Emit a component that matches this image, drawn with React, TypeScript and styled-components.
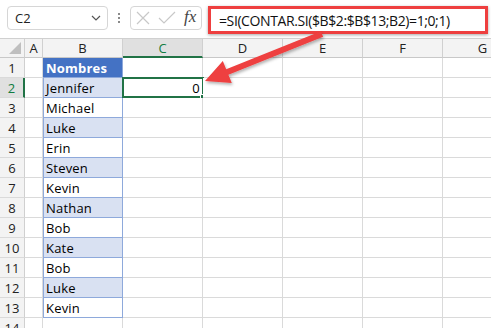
import styled, { createGlobalStyle, css } from "styled-components";

const GlobalStyle = createGlobalStyle`
  html, body {
    margin: 0;
    padding: 0;
    background: #ffffff;
  }
`;

const COLS = ["A", "B", "C", "D", "E", "F", "G"];
const NAMES = [
  "Jennifer",
  "Michael",
  "Luke",
  "Erin",
  "Steven",
  "Kevin",
  "Nathan",
  "Bob",
  "Kate",
  "Bob",
  "Luke",
  "Kevin",
];

type Kind = "plain" | "title" | "band" | "entry";

const App = () => {
  const rows = Array.from({ length: 14 }, (_, i) => i + 1);

  const kindFor = (col: string, row: number): Kind => {
    if (col !== "B" || row > 13) return "plain";
    if (row === 1) return "title";
    return row % 2 === 0 ? "band" : "entry";
  };

  const textFor = (col: string, row: number) => {
    if (col === "B" && row === 1) return "Nombres";
    if (col === "B" && row >= 2 && row <= 13) return NAMES[row - 2];
    if (col === "C" && row === 2) return "0";
    return "";
  };

  return (
    <Page>
      <GlobalStyle />
      <Toolbar>
        <NameBox>
          <span>C2</span>
          <svg width="10" height="6" viewBox="0 0 10 6">
            <path d="M1 1 L5 5 L9 1" fill="none" stroke="#555" strokeWidth="1.2" />
          </svg>
        </NameBox>
        <Dots>
          <i />
          <i />
          <i />
        </Dots>
        <ActionBox>
          <svg width="14" height="14" viewBox="0 0 14 14">
            <path d="M1 1 L13 13 M13 1 L1 13" stroke="#c8c8c8" strokeWidth="1.2" />
          </svg>
          <svg width="18" height="14" viewBox="0 0 18 14">
            <path d="M1 7 L6 12 L17 1" fill="none" stroke="#c8c8c8" strokeWidth="1.2" />
          </svg>
          <Fx>fx</Fx>
        </ActionBox>
        <FormulaBox>=SI(CONTAR.SI($B$2:$B$13;B2)=1;0;1)</FormulaBox>
      </Toolbar>

      <Sheet>
        <Corner>
          <svg width="12" height="12" viewBox="0 0 12 12">
            <polygon points="12,0 12,12 0,12" fill="#bfbfbf" />
          </svg>
        </Corner>
        {COLS.map((c) => (
          <ColHead key={c} $active={c === "C"}>
            {c}
          </ColHead>
        ))}
        {rows.map((r) => (
          <Row key={r}>
            <RowHead $active={r === 2}>{r}</RowHead>
            {COLS.map((c) => {
              const text = textFor(c, r);
              const selected = c === "C" && r === 2;
              return (
                <Cell key={c} $kind={kindFor(c, r)} $right={c === "C"}>
                  {text}
                  {selected && (
                    <Selection>
                      <FillHandle />
                    </Selection>
                  )}
                </Cell>
              );
            })}
          </Row>
        ))}
      </Sheet>

      <ArrowLayer width="491" height="328" viewBox="0 0 491 328">
        <defs>
          <filter id="shade" x="-20%" y="-20%" width="140%" height="140%">
            <feDropShadow dx="1" dy="2" stdDeviation="1.5" floodColor="#000" floodOpacity="0.3" />
          </filter>
        </defs>
        <polygon
          points="205,81 222.8,60.9 226.2,69.2 320.9,31.2 323.1,36.8 228.4,74.8 231.8,83.1"
          fill="#ee3f3f"
          filter="url(#shade)"
        />
      </ArrowLayer>
    </Page>
  );
};

const Page = styled.div`
  position: relative;
  width: 491px;
  height: 328px;
  overflow: hidden;
  background: #ffffff;
  font-family: "Open Sans", "Noto Sans", sans-serif;
`;

const Toolbar = styled.div`
  display: flex;
  align-items: flex-start;
  height: 38px;
  padding: 6px 0 0 7px;
  box-sizing: border-box;
`;

const NameBox = styled.div`
  display: flex;
  align-items: center;
  justify-content: space-between;
  width: 101px;
  height: 24px;
  box-sizing: border-box;
  padding: 0 6px 0 7px;
  border: 1px solid #d6d6d6;
  border-radius: 4px;
  font-size: 13px;
  color: #222;
`;

const Dots = styled.div`
  display: flex;
  flex-direction: column;
  justify-content: center;
  gap: 2px;
  width: 22px;
  height: 24px;
  align-items: center;

  i {
    display: block;
    width: 2px;
    height: 2px;
    background: #8a8a8a;
  }
`;

const ActionBox = styled.div`
  display: flex;
  align-items: center;
  gap: 8px;
  width: 72px;
  height: 24px;
  box-sizing: border-box;
  padding: 0 4px 0 5px;
  border: 1px solid #d6d6d6;
  border-radius: 4px;
`;

const Fx = styled.span`
  font-family: "Liberation Serif", serif;
  font-style: italic;
  font-size: 17px;
  color: #444;
  margin-top: -2px;
`;

const FormulaBox = styled.div`
  margin-left: 6px;
  width: 280px;
  height: 28px;
  box-sizing: border-box;
  border: 3px solid #ee3f3f;
  box-shadow: 0 1px 3px rgba(0, 0, 0, 0.35);
  padding-left: 8px;
  display: flex;
  align-items: center;
  font-size: 14px;
  letter-spacing: -0.4px;
  color: #111;
  white-space: nowrap;
`;

const Sheet = styled.div`
  display: grid;
  grid-template-columns: 25px 18px repeat(5, 80px) 80px;
  grid-auto-rows: 20px;
  width: 571px;
`;

const Row = styled.div`
  display: contents;
`;

const headBase = css`
  box-sizing: border-box;
  background: #f3f3f3;
  border-right: 1px solid #d0d0d0;
  border-bottom: 1px solid #c8c8c8;
  color: #222;
  font-size: 13px;
  display: flex;
  align-items: center;
  justify-content: center;
`;

const Corner = styled.div`
  ${headBase};
  border-top: 1px solid #d0d0d0;
  align-items: flex-end;
  justify-content: flex-end;
  padding: 0 3px 3px 0;
`;

const ColHead = styled.div<{ $active?: boolean }>`
  ${headBase};
  border-top: 1px solid #d0d0d0;
  ${(p) =>
    p.$active &&
    css`
      background: #e0e0e0;
      color: #107c41;
      border-bottom: 2px solid #217346;
    `}
`;

const RowHead = styled.div<{ $active?: boolean }>`
  ${headBase};
  border-bottom-color: #dadada;
  ${(p) =>
    p.$active &&
    css`
      background: #e0e0e0;
      color: #107c41;
      border-right: 2px solid #217346;
    `}
`;

const kinds = {
  plain: css`
    background: #ffffff;
  `,
  title: css`
    background: #4472c4;
    color: #ffffff;
    font-weight: 700;
    border-color: #8ea9db;
  `,
  band: css`
    background: #d9e1f2;
    border-color: #8ea9db;
    box-shadow: inset 1px 0 0 #8ea9db;
  `,
  entry: css`
    background: #ffffff;
    border-color: #8ea9db;
    box-shadow: inset 1px 0 0 #8ea9db;
  `,
};

const Cell = styled.div<{ $kind: Kind; $right?: boolean }>`
  position: relative;
  box-sizing: border-box;
  border-right: 1px solid #dadada;
  border-bottom: 1px solid #dadada;
  font-family: "Open Sans", "Noto Sans", sans-serif;
  font-size: 13px;
  letter-spacing: 0.2px;
  color: #000;
  display: flex;
  align-items: center;
  padding: 1px 2px 0 3px;
  justify-content: ${(p) => (p.$right ? "flex-end" : "flex-start")};
  white-space: nowrap;
  ${(p) => kinds[p.$kind]};
`;

const Selection = styled.div`
  position: absolute;
  left: -1px;
  top: -1px;
  right: -2px;
  bottom: -1px;
  border: 2px solid #217346;
  pointer-events: none;
`;

const FillHandle = styled.div`
  position: absolute;
  right: -5px;
  bottom: -5px;
  width: 5px;
  height: 5px;
  background: #217346;
  border: 1px solid #ffffff;
`;

const ArrowLayer = styled.svg`
  position: absolute;
  left: 0;
  top: 0;
  pointer-events: none;
`;

export default App;
